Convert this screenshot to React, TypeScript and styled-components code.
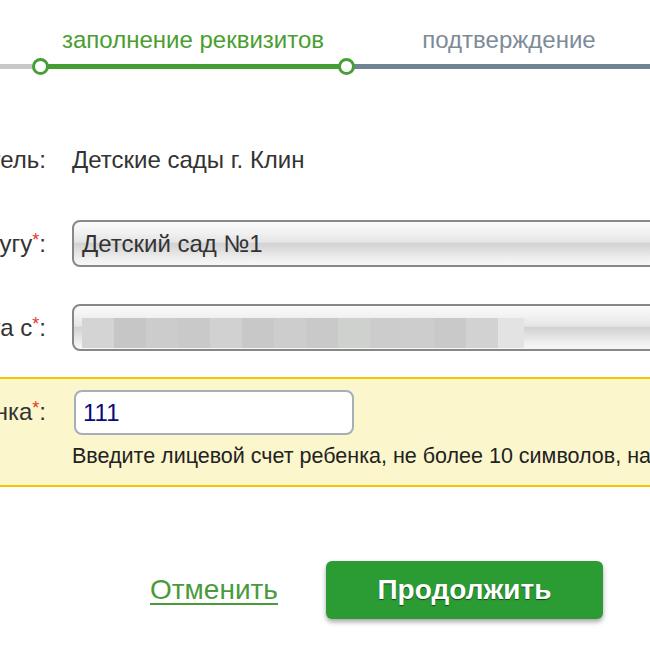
import React from 'react';
import styled, { createGlobalStyle } from 'styled-components';

const GlobalStyle = createGlobalStyle`
  html, body {
    margin: 0;
    padding: 0;
    background: #fff;
    overflow: hidden;
  }
  body {
    font-family: "Liberation Sans", Arial, sans-serif;
    color: #333;
  }
`;

const Page = styled.div`
  width: 650px;
  height: 650px;
  overflow: hidden;
`;

const Steps = styled.div`
  display: flex;
  align-items: flex-end;
  padding-top: 28px;
`;

const Lead = styled.div`
  width: 40px;
  height: 5px;
  background: #c8c8c8;
  flex-shrink: 0;
`;

const Step = styled.div<{ $width: number }>`
  position: relative;
  width: ${p => p.$width}px;
  flex-shrink: 0;
  display: flex;
  flex-direction: column;
  align-items: center;
`;

const StepLabel = styled.div<{ $active?: boolean }>`
  font-size: 24px;
  line-height: 24px;
  color: ${p => (p.$active ? '#4a9e2f' : '#7d8b98')};
  margin-bottom: 12px;
  white-space: nowrap;
`;

const Bar = styled.div<{ $color: string }>`
  align-self: stretch;
  height: 5px;
  background: ${p => p.$color};
`;

const Dot = styled.span`
  position: absolute;
  left: -8px;
  bottom: -6px;
  width: 11px;
  height: 11px;
  border: 3px solid #4a9e3a;
  border-radius: 50%;
  background: #fff;
`;

const Form = styled.div`
  display: flex;
  flex-direction: column;
  margin-top: 67px;
`;

const Row = styled.div<{ $highlight?: boolean }>`
  display: grid;
  grid-template-columns: 46px 1fr;
  column-gap: 26px;
  align-items: ${p => (p.$highlight ? 'start' : 'center')};
  min-height: 47px;
  margin-bottom: ${p => (p.$highlight ? 0 : 37)}px;
  ${p =>
    p.$highlight &&
    `
    background: #fcf6cc;
    border-top: 2px solid #f5c500;
    border-bottom: 2px solid #f5c500;
    padding: 11px 0 18px;
    margin-top: -11px;
  `}
`;

const Label = styled.div<{ $offset?: number }>`
  display: flex;
  justify-content: flex-end;
  white-space: nowrap;
  font-size: 24px;
  line-height: 24px;
  color: #333;
  padding-top: ${p => p.$offset ?? 0}px;
`;

const Required = styled.span`
  color: #e8332a;
  font-size: 18px;
  vertical-align: top;
  line-height: 16px;
`;

const Value = styled.div`
  font-size: 24px;
  line-height: 24px;
  color: #333;
  white-space: nowrap;
`;

const Select = styled.div`
  height: 43px;
  margin-right: -30px;
  border: 2px solid #888;
  border-radius: 8px;
  display: flex;
  align-items: center;
  padding-left: 8px;
  font-size: 24px;
  color: #333;
  background: linear-gradient(
    to bottom,
    #fbfbfb 0%,
    #f1f1f1 25%,
    #e4e4e4 47%,
    #d2d2d2 50%,
    #dedede 65%,
    #efefef 85%,
    #f7f7f7 100%
  );
`;

const Redacted = styled.div`
  display: flex;
  height: 30px;
  margin-top: 10px;
`;

const Pixel = styled.span<{ $tone: string; $w?: number }>`
  width: ${p => p.$w ?? 32}px;
  height: 100%;
  background: ${p => p.$tone};
`;

const Field = styled.div`
  display: flex;
  flex-direction: column;
  margin-left: 2px;
`;

const Input = styled.input`
  box-sizing: border-box;
  width: 280px;
  height: 45px;
  border: 2px solid #a3b0ba;
  border-radius: 8px;
  background: #fff;
  padding: 0 7px;
  font-family: inherit;
  font-size: 24px;
  color: #0a0a7a;
  outline: none;
`;

const Hint = styled.div`
  margin-top: 10px;
  margin-left: -2px;
  font-size: 21.5px;
  line-height: 22px;
  color: #222;
  white-space: nowrap;
`;

const Actions = styled.div`
  display: flex;
  align-items: center;
  gap: 48px;
  padding-left: 150px;
  margin-top: 74px;
`;

const CancelLink = styled.a`
  font-size: 28px;
  color: #4a9a3c;
  text-decoration: underline;
  text-underline-offset: 4px;
  cursor: pointer;
`;

const SubmitButton = styled.button`
  width: 277px;
  height: 58px;
  border: none;
  border-radius: 6px;
  background: #2b9c34;
  box-shadow: 0 3px 5px rgba(0, 0, 0, 0.35);
  color: #fff;
  font-family: inherit;
  font-size: 28px;
  font-weight: bold;
  text-shadow: 0 1px 1px rgba(0, 40, 0, 0.7);
  cursor: pointer;
`;

const tones = [
  '#d4d4d4', '#c6c6c6', '#cccccc', '#c9c9c9', '#d1d1d1', '#c8c8c8', '#cdcdcd',
  '#c9c9c9', '#cfd1cf', '#cccccc', '#cdcdcd', '#c9c9c9', '#d2d2d2',
];

const App: React.FC = () => {
  return (
    <Page>
      <GlobalStyle />
      <Steps>
        <Lead />
        <Step $width={306}>
          <StepLabel $active>заполнение реквизитов</StepLabel>
          <Bar $color="#449e33" />
          <Dot />
        </Step>
        <Step $width={326}>
          <StepLabel>подтверждение</StepLabel>
          <Bar $color="#6f8493" />
          <Dot />
        </Step>
      </Steps>

      <Form>
        <Row>
          <Label>Получатель:</Label>
          <Value>Детские сады г. Клин</Value>
        </Row>
        <Row>
          <Label>
            Выберите услугу<Required>*</Required>:
          </Label>
          <Select>Детский сад №1</Select>
        </Row>
        <Row>
          <Label>
            Оплата с<Required>*</Required>:
          </Label>
          <Select>
            <Redacted>
              {tones.map((t, i) => (
                <Pixel key={i} $tone={t} />
              ))}
              <Pixel $tone="#e3e3e3" $w={26} />
            </Redacted>
          </Select>
        </Row>
        <Row $highlight>
          <Label $offset={10}>
            Лицевой счет ребенка<Required>*</Required>:
          </Label>
          <Field>
            <Input defaultValue="111" />
            <Hint>Введите лицевой счет ребенка, не более 10 символов, например 1234567890</Hint>
          </Field>
        </Row>
      </Form>

      <Actions>
        <CancelLink>Отменить</CancelLink>
        <SubmitButton>Продолжить</SubmitButton>
      </Actions>
    </Page>
  );
};

export default App;
